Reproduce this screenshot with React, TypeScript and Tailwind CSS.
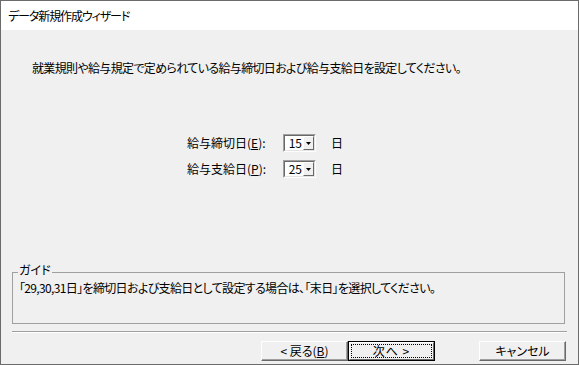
import React from "react";

function Combo({ value }: { value: string }) {
  return (
    <div className="w-[33px] h-[18px] border border-t-[#a0a0a0] border-l-[#a0a0a0] border-b-white border-r-white">
      <div className="w-full h-full flex border border-t-[#696969] border-l-[#696969] border-b-[#e3e3e3] border-r-[#e3e3e3] bg-white">
        <div className="flex-1 text-right pr-[1px] leading-[14px]">{value}</div>
        <div className="w-[11px] h-full bg-[#f0f0f0] border border-t-white border-l-white border-b-[#696969] border-r-[#696969] flex items-center justify-center">
          <svg width="5" height="3" viewBox="0 0 5 3">
            <path d="M0 0H5L2.5 3Z" fill="#000" />
          </svg>
        </div>
      </div>
    </div>
  );
}

function Btn({ children, def }: { children: React.ReactNode; def?: boolean }) {
  if (def) {
    return (
      <div className="w-[87px] h-[20px] border border-[#000] bg-[#f0f0f0]">
        <div className="w-full h-full border border-t-white border-l-white border-b-[#696969] border-r-[#696969] p-[1px]">
          <div className="w-full h-full border border-dotted border-black flex items-center justify-center leading-[14px]">
            {children}
          </div>
        </div>
      </div>
    );
  }
  return (
    <div className="w-[87px] h-[20px] bg-[#f0f0f0] border border-t-white border-l-white border-b-[#696969] border-r-[#696969] shadow-[inset_-1px_-1px_0_#a0a0a0] flex items-center justify-center leading-[14px]">
      {children}
    </div>
  );
}

export default function App() {
  return (
    <div className="w-[579px] h-[365px] border border-[#6b6b6b] flex flex-col bg-[#f0f0f0] text-black text-[12px] leading-[14px] font-['Noto_Sans_CJK_JP','Noto_Sans_CJK_SC',sans-serif] [font-feature-settings:'palt']">
      <div className="h-[29px] bg-white flex items-center pl-[7px] tracking-[-1.1px]">
        データ新規作成ウィザード
      </div>
      <div className="flex-1 flex flex-col">
        <div className="mt-[31px] pl-[31px] tracking-[-0.65px]">
          就業規則や給与規定で定められている給与締切日および給与支給日を設定してください。
        </div>
        <div className="mt-[59px] flex items-center h-[18px] pl-[186px]">
          <div className="w-[96px]">
            給与締切日(<span className="underline">E</span>):
          </div>
          <Combo value="15" />
          <div className="ml-[15px]">日</div>
        </div>
        <div className="mt-[8px] flex items-center h-[18px] pl-[186px]">
          <div className="w-[96px]">
            給与支給日(<span className="underline">P</span>):
          </div>
          <Combo value="25" />
          <div className="ml-[15px]">日</div>
        </div>
        <div className="relative mt-[94px] ml-[11px] w-[553px] h-[52px] border border-[#a0a0a0]">
          <span className="absolute -top-[9px] left-[5px] bg-[#f0f0f0] px-[1px] leading-[12px]">ガイド</span>
          <div className="pt-[8px] pl-[6px] tracking-[-0.65px]">
            「29,30,31日」を締切日および支給日として設定する場合は、「末日」を選択してください。
          </div>
        </div>
        <div className="mt-[7px] ml-[11px] w-[555px]">
          <div className="h-[1px] bg-[#a0a0a0]" />
          <div className="h-[1px] bg-white" />
        </div>
        <div className="mt-[8px] flex pl-[260px]">
          <Btn>
            &lt; 戻る(<span className="underline">B</span>)
          </Btn>
          <Btn def>
            <span className="tracking-[1px]">次へ &gt;</span>
          </Btn>
          <div className="ml-[44px]">
            <Btn>キャンセル</Btn>
          </div>
        </div>
      </div>
    </div>
  );
}
